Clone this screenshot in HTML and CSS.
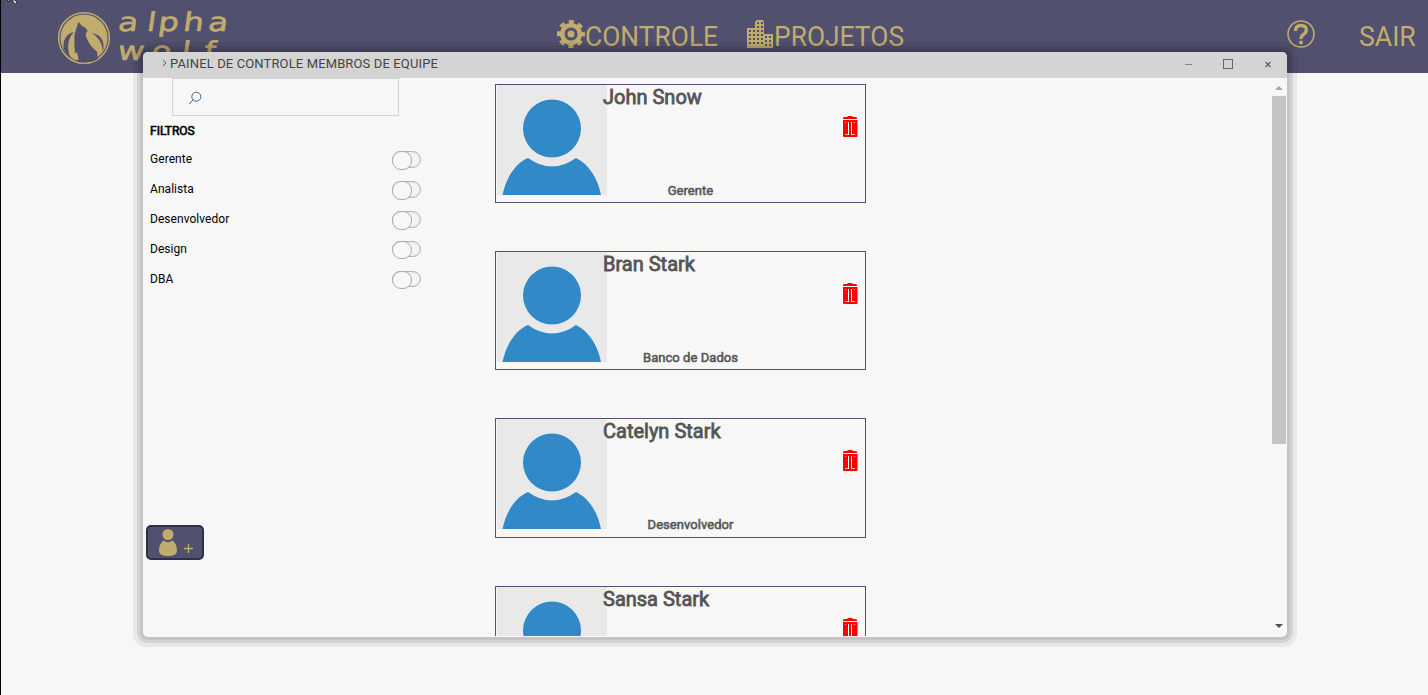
FILE: index.html
```html
<!DOCTYPE html>
<html lang="pt-BR">
<head>
<meta charset="utf-8">
<title>Alpha Wolf</title>
<link rel="stylesheet" href="styles.css">
</head>
<body>
<svg class="defs" width="0" height="0">
  <symbol id="avatar" viewBox="0 0 110 110">
    <rect width="110" height="110" fill="#e9e9e9"/>
    <circle cx="55" cy="43.5" r="29" fill="#3189c8"/>
    <path fill="#3189c8" d="M5.500 110C8.500 95 17 79 31 73Q55 90 79 73C92 79 101 94 104 110Z"/>
  </symbol>
  <symbol id="trash" viewBox="0 0 16 22">
    <path fill="#f00" d="M1 3V2Q1 1 3 1H5L6 0H10L11 1H13Q15 1 15 2V3ZM1 4H15.500V20Q15.500 21 14.500 21H2Q1 21 1 20Z"/>
    <path fill="none" stroke="#fff" stroke-width="1" d="M6.500 6V19M9.500 6V19"/>
    <path fill="none" stroke="#fff" stroke-opacity=".7" stroke-width="1" d="M3 6.500H4M12 6.500H13M3 18.500H6M10 18.500H13"/>
  </symbol>
</svg>

<header class="topbar">
  <svg class="emblem" viewBox="0 0 54 54">
    <circle cx="27" cy="27" r="25.300" fill="none" stroke="#c0ac6d" stroke-width="1.500"/>
    <circle cx="27" cy="27" r="23.500" fill="#c0ac6d"/>
    <path fill="#52506f" d="M21.500 11L24 14Q32 18 35 30Q40 36 41 48Q37 51 28 51.500L20 51Q23 46 20 45L17 48L18 40Q15 31 18.500 20Z"/>
    <path fill="#52506f" d="M17 21Q9 28 12 43L14 47Q4 40 7 30Q10 22 17 21ZM35 22Q45 28 46 41Q49 25 35 22Z"/>
    <path fill="#c0ac6d" d="M17 23Q9 31 12.500 42Q14 45 17 41Q18 30 17 23ZM30 20Q39 23 42 34Q44 40 40.500 41Q32 35 28.500 24ZM17 43L20 41L21 46L17 49L15 45Z"/>
  </svg>
  <svg class="wordmark" viewBox="0 0 116 70">
    <g transform="skewX(-8) scale(1.250 1)">
      <text x="2 25 34 54 74" y="31">alpha</text>
      <text x="5 32 56 74" y="60">wolf</text>
    </g>
  </svg>
  <nav class="menu">
    <a class="menu-item">
      <svg class="gear" viewBox="0 0 28 28">
        <circle cx="14" cy="14" r="12" fill="none" stroke="#c0ac6d" stroke-width="4" stroke-dasharray="5 4.425" stroke-dashoffset="2.500"/>
        <circle cx="14" cy="14" r="8.800" fill="none" stroke="#c0ac6d" stroke-width="4.500"/>
        <circle cx="14" cy="14" r="3.500" fill="#c0ac6d"/>
      </svg><span>CONTROLE</span></a>
    <a class="menu-item projects">
      <svg class="city" viewBox="0 0 27 28">
        <path fill="#c0ac6d" d="M0 8H8V2L10 0H16L17 2V14H26V28H0Z"/>
        <path stroke="#52506f" stroke-width="2" stroke-dasharray="2 2" fill="none" d="M3 10V26M7 10V26M11 2V26M15 2V26M19 16V26M23 16V26"/>
      </svg><span>PROJETOS</span></a>
  </nav>
  <svg class="help" viewBox="0 0 28 28">
    <circle cx="14" cy="14" r="13" fill="none" stroke="#c0ac6d" stroke-width="1.600"/>
    <path d="M8.500 11Q8.500 5.500 14 5.500T19.300 10Q19.300 12.500 16.500 14.500Q14 16 14 19" fill="none" stroke="#c0ac6d" stroke-width="3.300"/>
    <circle cx="14" cy="22.500" r="2" fill="#c0ac6d"/>
  </svg>
  <a class="exit">SAIR</a>
</header>

<svg class="cursor" viewBox="0 0 12 4"><path d="M0 0H3L2 2Z M5 0H8L10 3L8 4Z" fill="#fff" stroke="#111" stroke-width=".8"/></svg>

<main class="window">
  <div class="titlebar">
    <svg class="chevron" viewBox="0 0 5 8"><path d="M.8 1L4 4L.8 7"/></svg>
    <span class="title">PAINEL DE CONTROLE MEMBROS DE EQUIPE</span>
    <svg class="controls" viewBox="0 0 90 12">
      <path d="M1 6.500H8" stroke="#7c838a"/>
      <rect x="39.500" y="1.500" width="9" height="9" stroke="#5c6874"/>
      <path d="M81.500 4L86.500 9M86.500 4L81.500 9" stroke="#56616c" stroke-width="1.200"/>
    </svg>
  </div>
  <div class="content">
    <aside class="sidebar">
      <div class="search"><svg viewBox="0 0 14 14"><circle cx="8.300" cy="5.700" r="4.500"/><path d="M5.200 8.800L1 13"/></svg></div>
      <h2>FILTROS</h2>
      <div class="filter"><span>Gerente</span><i class="toggle"></i></div>
      <div class="filter"><span>Analista</span><i class="toggle"></i></div>
      <div class="filter"><span>Desenvolvedor</span><i class="toggle"></i></div>
      <div class="filter"><span>Design</span><i class="toggle short"></i></div>
      <div class="filter"><span>DBA</span><i class="toggle short"></i></div>
      <button class="add" aria-label="Adicionar">
        <svg viewBox="0 0 54 31"><circle cx="20" cy="7.500" r="5.500"/><path d="M15.500 13.500Q20 17 24.500 13.500Q29 17 29 24Q29 29 20 29T11 24Q11 17 15.500 13.500Z"/><path class="plus" d="M36 21.500H45M40.500 17V26"/></svg>
      </button>
    </aside>
    <section class="members">
      <article class="card"><svg class="photo"><use href="#avatar"/></svg><div class="info"><h3>John Snow</h3><p>Gerente</p></div><svg class="trash"><use href="#trash"/></svg></article>
      <article class="card"><svg class="photo"><use href="#avatar"/></svg><div class="info"><h3>Bran Stark</h3><p>Banco de Dados</p></div><svg class="trash"><use href="#trash"/></svg></article>
      <article class="card"><svg class="photo"><use href="#avatar"/></svg><div class="info"><h3>Catelyn Stark</h3><p>Desenvolvedor</p></div><svg class="trash"><use href="#trash"/></svg></article>
      <article class="card"><svg class="photo"><use href="#avatar"/></svg><div class="info"><h3>Sansa Stark</h3></div><svg class="trash"><use href="#trash"/></svg></article>
    </section>
    <div class="scrollbar">
      <svg class="arrow" viewBox="0 0 8 4"><path d="M0 4L4 0L8 4Z" fill="#a8a8a8"/></svg>
      <div class="thumb"></div>
      <svg class="arrow down" viewBox="0 0 8 4"><path d="M0 0L4 4L8 0Z" fill="#505050"/></svg>
    </div>
  </div>
</main>
</body>
</html>
```
FILE: styles.css
```css
* { box-sizing: border-box; }
body {
  margin: 0;
  height: 695px;
  overflow: hidden;
  background: #f7f7f7;
  border-left: 1px solid #000;
  font-family: Roboto, sans-serif;
}
svg { display: block; flex: none; }
.defs { position: absolute; }
.topbar {
  display: flex;
  align-items: flex-start;
  height: 73px;
  padding-left: 56px;
  background: #52506f;
  color: #c0ac6d;
  font-size: 27px;
  line-height: 34px;
}
.emblem { width: 54px; height: 54px; margin-top: 11px; }
.wordmark {
  width: 116px;
  height: 70px;
  margin-left: 8px;
  overflow: visible;
  fill: #c0ac6d;
  stroke: #c0ac6d;
  stroke-width: .6px;
  font-family: "DejaVu Sans", sans-serif;
  font-size: 26px;
}
.menu { display: flex; margin: 20px 0 0 322px; }
.menu-item { display: flex; width: 190px; }
.menu-item span { transform: scaleX(0.977); transform-origin: left; }
.projects { width: 160px; }
.gear { width: 28px; height: 28px; }
.city { width: 27px; height: 28px; }
.help { width: 28px; height: 28px; margin: 20px 0 0 379.5px; }
.exit { margin: 20px 0 0 44px; transform: scaleX(0.985); transform-origin: left; }
.cursor { position: absolute; left: 7px; top: 0; width: 12px; height: 4px; }
.window {
  position: absolute;
  left: 143px;
  top: 52px;
  width: 1144px;
  height: 585px;
  overflow: hidden;
  background: #f7f7f7;
  border-radius: 5px;
  box-shadow: 0 0 0 3px rgba(0, 0, 0, .075), 0 0 0 6px rgba(0, 0, 0, .085), 0 0 0 10px rgba(0, 0, 0, .06);
}
.titlebar {
  display: flex;
  height: 26px;
  padding-left: 19px;
  background: #d4d4d4;
}
.chevron { width: 5px; height: 8px; margin-top: 7px; fill: none; stroke: #555; }
.title { margin-left: 3px; font-size: 13px; line-height: 24px; letter-spacing: .13px; color: #444; white-space: nowrap; }
.controls { width: 90px; height: 12px; margin: 6px 13px 0 auto; fill: none; }
.content { display: flex; height: 558px; overflow: hidden; }
.sidebar { display: flex; flex-direction: column; width: 352px; padding-left: 7px; font-size: 12px; }
.search { width: 227px; height: 38px; margin-left: 22px; padding: 12px 0 0 15px; border: 1px solid #d4d4d4; }
.search svg { width: 14px; height: 14px; fill: none; stroke: #476784; }
.sidebar h2 {
  margin: 0;
  height: 28px;
  font-size: 12px;
  font-weight: 400;
  line-height: 30px;
  -webkit-text-stroke: .6px #000;
}
.filter { display: flex; justify-content: space-between; width: 271px; height: 30px; line-height: 30px; letter-spacing: .05px; }
.toggle {
  width: 29px;
  height: 17px;
  margin-top: 7px;
  border: 1px solid #b5b5b5;
  border-radius: 9px;
  background: #f4f4f4;
  box-shadow: inset 0 0 2px #ccc;
}
.toggle::before {
  content: "";
  display: block;
  width: 18px;
  height: 17px;
  margin: -1px;
  border: 1px solid #aaa;
  border-radius: 9px;
  background: #f8f8f8;
}
.short, .short::before { height: 16px; }
.add {
  width: 58px;
  height: 35px;
  margin: 231px 0 0 -4px;
  padding: 0;
  border: 2px solid #302d48;
  border-radius: 5px;
  background: #52506f;
}
.add svg { width: 54px; height: 31px; fill: #c0ac6d; }
.plus { stroke: #c0ac6d; stroke-width: 1.3; }
.members { display: flex; flex-direction: column; gap: 48px; width: 371px; padding-top: 5.9px; }
.card { display: flex; flex: none; height: 119.25px; padding-left: 1px; border: 1px solid #52506f; }
.photo { width: 110px; height: 110px; }
.info { display: flex; flex-direction: column; justify-content: space-between; width: 175px; margin-left: -4px; color: #555; }
.info h3 { margin: 0; font-size: 20px; font-weight: 400; line-height: 24px; -webkit-text-stroke: .8px #555; }
.info p { margin: 0; font-size: 13px; line-height: 23.3px; letter-spacing: .05px; text-align: center; -webkit-text-stroke: .55px #555; }
.trash { width: 16px; height: 22px; margin: 31px 0 0 64px; }
.scrollbar { display: flex; flex-direction: column; align-items: center; width: 14px; margin-left: auto; margin-right: 1px; padding-top: 8px; }
.thumb { width: 14px; height: 348px; margin-top: 6px; background: #c4c4c4; }
.arrow { width: 8px; height: 4px; }
.down { margin-top: 180px; }
```
